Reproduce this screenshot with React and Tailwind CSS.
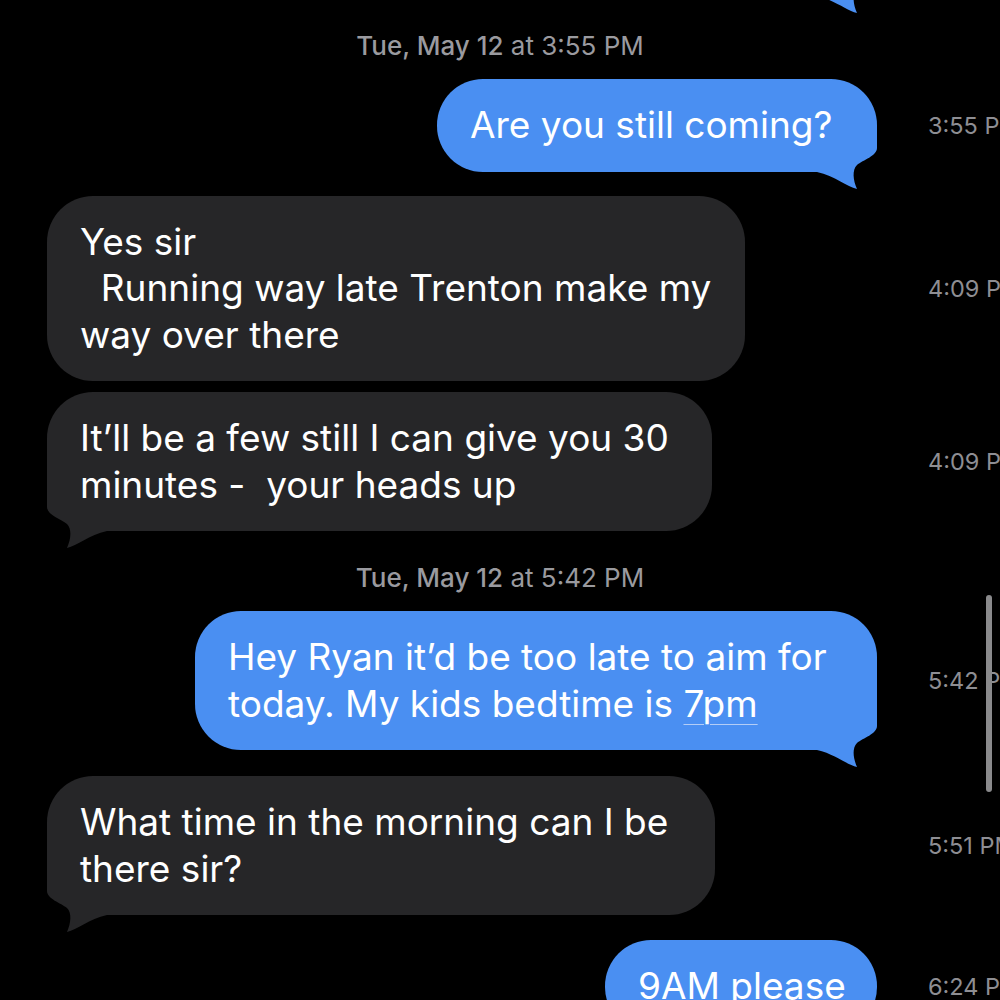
import React from 'react';

const BLUE = 'bg-[#4a8ff2]';
const GRAY = 'bg-[#262628]';

// bubble tail, drawn in coords where (0,0) is the bubble's bottom-right corner
const Tail = ({ side, color }) => (
    <svg
        width="61"
        height="65"
        viewBox="-60 -46 61 65"
        className={`absolute bottom-[-19px] ${side === 'right' ? 'right-[-1px]' : 'left-[-1px] -scale-x-100'}`}
    >
        <path
            d="M -60 -46 L 0 -46 L 0 -24 C 0 -16 -14 -12 -20 -7 C -25 -2 -24 8 -20 17 C -30 15 -42 4 -60 0 Z"
            fill={color}
        />
    </svg>
);

const Bubble = ({ from, width, tail, lines, className = '' }) => {
    const me = from === 'me';
    return (
        <div
            className={`relative shrink-0 rounded-[46px] py-[23px] pl-[33px] text-white text-[37px] leading-[46.5px] whitespace-pre ${me ? BLUE : GRAY} ${className}`}
            style={{ width }}
        >
            {tail && <Tail side={me ? 'right' : 'left'} color={me ? '#4a8ff2' : '#262628'} />}
            <div className="relative">
                {lines.map((l, i) => (
                    <div key={i}>{l}</div>
                ))}
            </div>
        </div>
    );
};

const Row = ({ from, time, className = '', children }) => (
    <div className={`flex items-center ${className}`}>
        <div className={`w-[830px] shrink-0 flex ${from === 'me' ? 'justify-end' : 'justify-start'}`}>{children}</div>
        <div className="ml-[51px] shrink-0 whitespace-nowrap text-[23.5px] text-[#8e8e93]">{time}</div>
    </div>
);

const DateLine = ({ day, time, className = '' }) => (
    <div className={`w-[1000px] h-[30px] leading-[30px] text-center text-[26px] text-[#9a9a9f] ${className}`}>
        <span className="font-medium">{day}</span> at {time}
    </div>
);

export default function App() {
    return (
        <div className="relative w-[1000px] h-[1000px] overflow-hidden bg-black pl-[47px] font-['Inter','Liberation_Sans',sans-serif]">
            <Row from="me" className="mt-[-64px]">
                <Bubble from="me" width={300} tail lines={[' ']} className="h-[60px]" />
            </Row>

            <DateLine day="Tue, May 12" time="3:55 PM" className="mt-[35px] ml-[-47px]" />

            <Row from="me" time="3:55 PM" className="mt-[18px]">
                <Bubble from="me" width={440} tail lines={['Are you still coming?']} />
            </Row>

            <Row from="them" time="4:09 PM" className="mt-[24px]">
                <Bubble
                    from="them"
                    width={698}
                    lines={['Yes sir', '  Running way late Trenton make my', 'way over there']}
                />
            </Row>

            <Row from="them" time="4:09 PM" className="mt-[11px]">
                <Bubble
                    from="them"
                    width={665}
                    tail
                    lines={['It’ll be a few still I can give you 30', 'minutes -  your heads up']}
                />
            </Row>

            <DateLine day="Tue, May 12" time="5:42 PM" className="mt-[32px] ml-[-47px]" />

            <Row from="me" time="5:42 PM" className="mt-[18px]">
                <Bubble
                    from="me"
                    width={682}
                    tail
                    lines={[
                        'Hey Ryan it’d be too late to aim for',
                        <span key="l2">
                            today. My kids bedtime is{' '}
                            <span className="underline decoration-[#b4cdf6] decoration-1 underline-offset-[7px]">7pm</span>
                        </span>,
                    ]}
                />
            </Row>

            <Row from="them" time="5:51 PM" className="mt-[26px]">
                <Bubble from="them" width={668} tail lines={['What time in the morning can I be', 'there sir?']} />
            </Row>

            <Row from="me" time="6:24 PM" className="mt-[25px]">
                <Bubble from="me" width={272} lines={['9AM please']} className="pl-[32px]" />
            </Row>

            {/* scroll indicator */}
            <div className="absolute left-[986px] top-[595px] w-[6px] h-[197px] rounded-full bg-[#8a8a8c]" />
        </div>
    );
}
